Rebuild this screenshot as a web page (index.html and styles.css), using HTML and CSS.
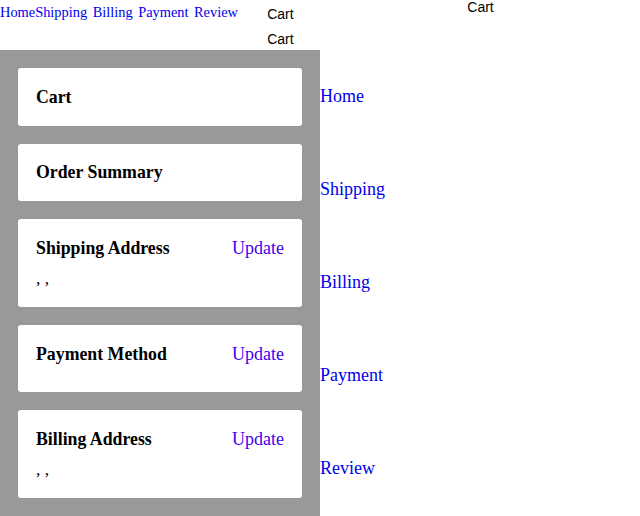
FILE: index.html
```html
<!DOCTYPE html>
<html>
<head>
<meta charset="utf-8">
<title>Checkout</title>
<link rel="stylesheet" href="styles.css">
</head>
<body>
<header class="header">
  <nav class="nav">
    <a href="#">Home</a><a href="#">Shipping</a>
    <a class="spaced" href="#">Billing</a>
    <a class="spaced" href="#">Payment</a>
    <a class="spaced" href="#">Review</a>
  </nav>
  <div class="cart-col">
    <div>Cart</div>
    <div>Cart</div>
  </div>
  <div class="cart-right">Cart</div>
</header>
<main class="main">
  <section class="panel">
    <div class="card">
      <div class="card-head"><h3 class="title">Cart</h3></div>
    </div>
    <div class="card">
      <div class="card-head"><h3 class="title">Order Summary</h3></div>
    </div>
    <div class="card">
      <div class="card-head with-action"><h3 class="title">Shipping Address</h3><a class="update" href="#">Update</a></div>
      <p class="addr">, ,</p>
    </div>
    <div class="card">
      <div class="card-head with-action"><h3 class="title">Payment Method</h3><a class="update" href="#">Update</a></div>
    </div>
    <div class="card">
      <div class="card-head with-action"><h3 class="title">Billing Address</h3><a class="update" href="#">Update</a></div>
      <p class="addr">, ,</p>
    </div>
  </section>
  <aside class="side">
    <a href="#">Home</a>
    <a href="#">Shipping</a>
    <a href="#">Billing</a>
    <a href="#">Payment</a>
    <a href="#">Review</a>
  </aside>
</main>
</body>
</html>
```
FILE: styles.css
```css
html, body {
  margin: 0;
  padding: 0;
  background: #fff;
}
body {
  font-family: "Liberation Serif", "Times New Roman", serif;
  width: 640px;
  height: 516px;
  overflow: hidden;
}
a {
  color: #0000ee;
  text-decoration: none;
}
.header {
  display: flex;
  height: 50px;
}
.nav {
  width: 268px;
  display: flex;
  align-items: flex-start;
  padding-top: 4px;
  font-size: 14.4px;
  line-height: 16.5px;
  box-sizing: border-box;
}
.nav .spaced {
  margin-left: 5.5px;
}
.cart-col {
  width: 52px;
  padding-top: 2px;
  font-family: "Liberation Sans", Arial, sans-serif;
  font-size: 14px;
  line-height: 25px;
  color: #000;
}
.cart-right {
  width: 320px;
  padding-left: 2px;
  text-align: center;
  font-family: "Liberation Sans", Arial, sans-serif;
  font-size: 14px;
  line-height: 15px;
  color: #000;
}
.main {
  display: flex;
  height: 466px;
}
.panel {
  width: 320px;
  box-sizing: border-box;
  background: #999999;
  padding: 18px;
  display: flex;
  flex-direction: column;
  gap: 18px;
}
.card {
  background: #fff;
  border-radius: 3px;
  padding: 18px;
}
.card-head {
  display: flex;
  justify-content: space-between;
  align-items: flex-start;
}
.card-head.with-action {
  margin-bottom: 9.5px;
}
.title {
  margin: 0;
  padding-top: 0.5px;
  font-size: 17.8px;
  line-height: 21px;
  font-weight: bold;
  color: #000;
}
.update {
  padding-top: 0.5px;
  font-size: 18px;
  line-height: 21px;
  color: #4000ee;
}
.addr {
  margin: 0;
  font-size: 17.6px;
  line-height: 21px;
  color: #000;
}
.side {
  flex: 1;
  display: flex;
  flex-direction: column;
  padding-bottom: 1px;
}
.side a {
  flex: 1;
  display: flex;
  align-items: center;
  font-size: 18px;
}
```
